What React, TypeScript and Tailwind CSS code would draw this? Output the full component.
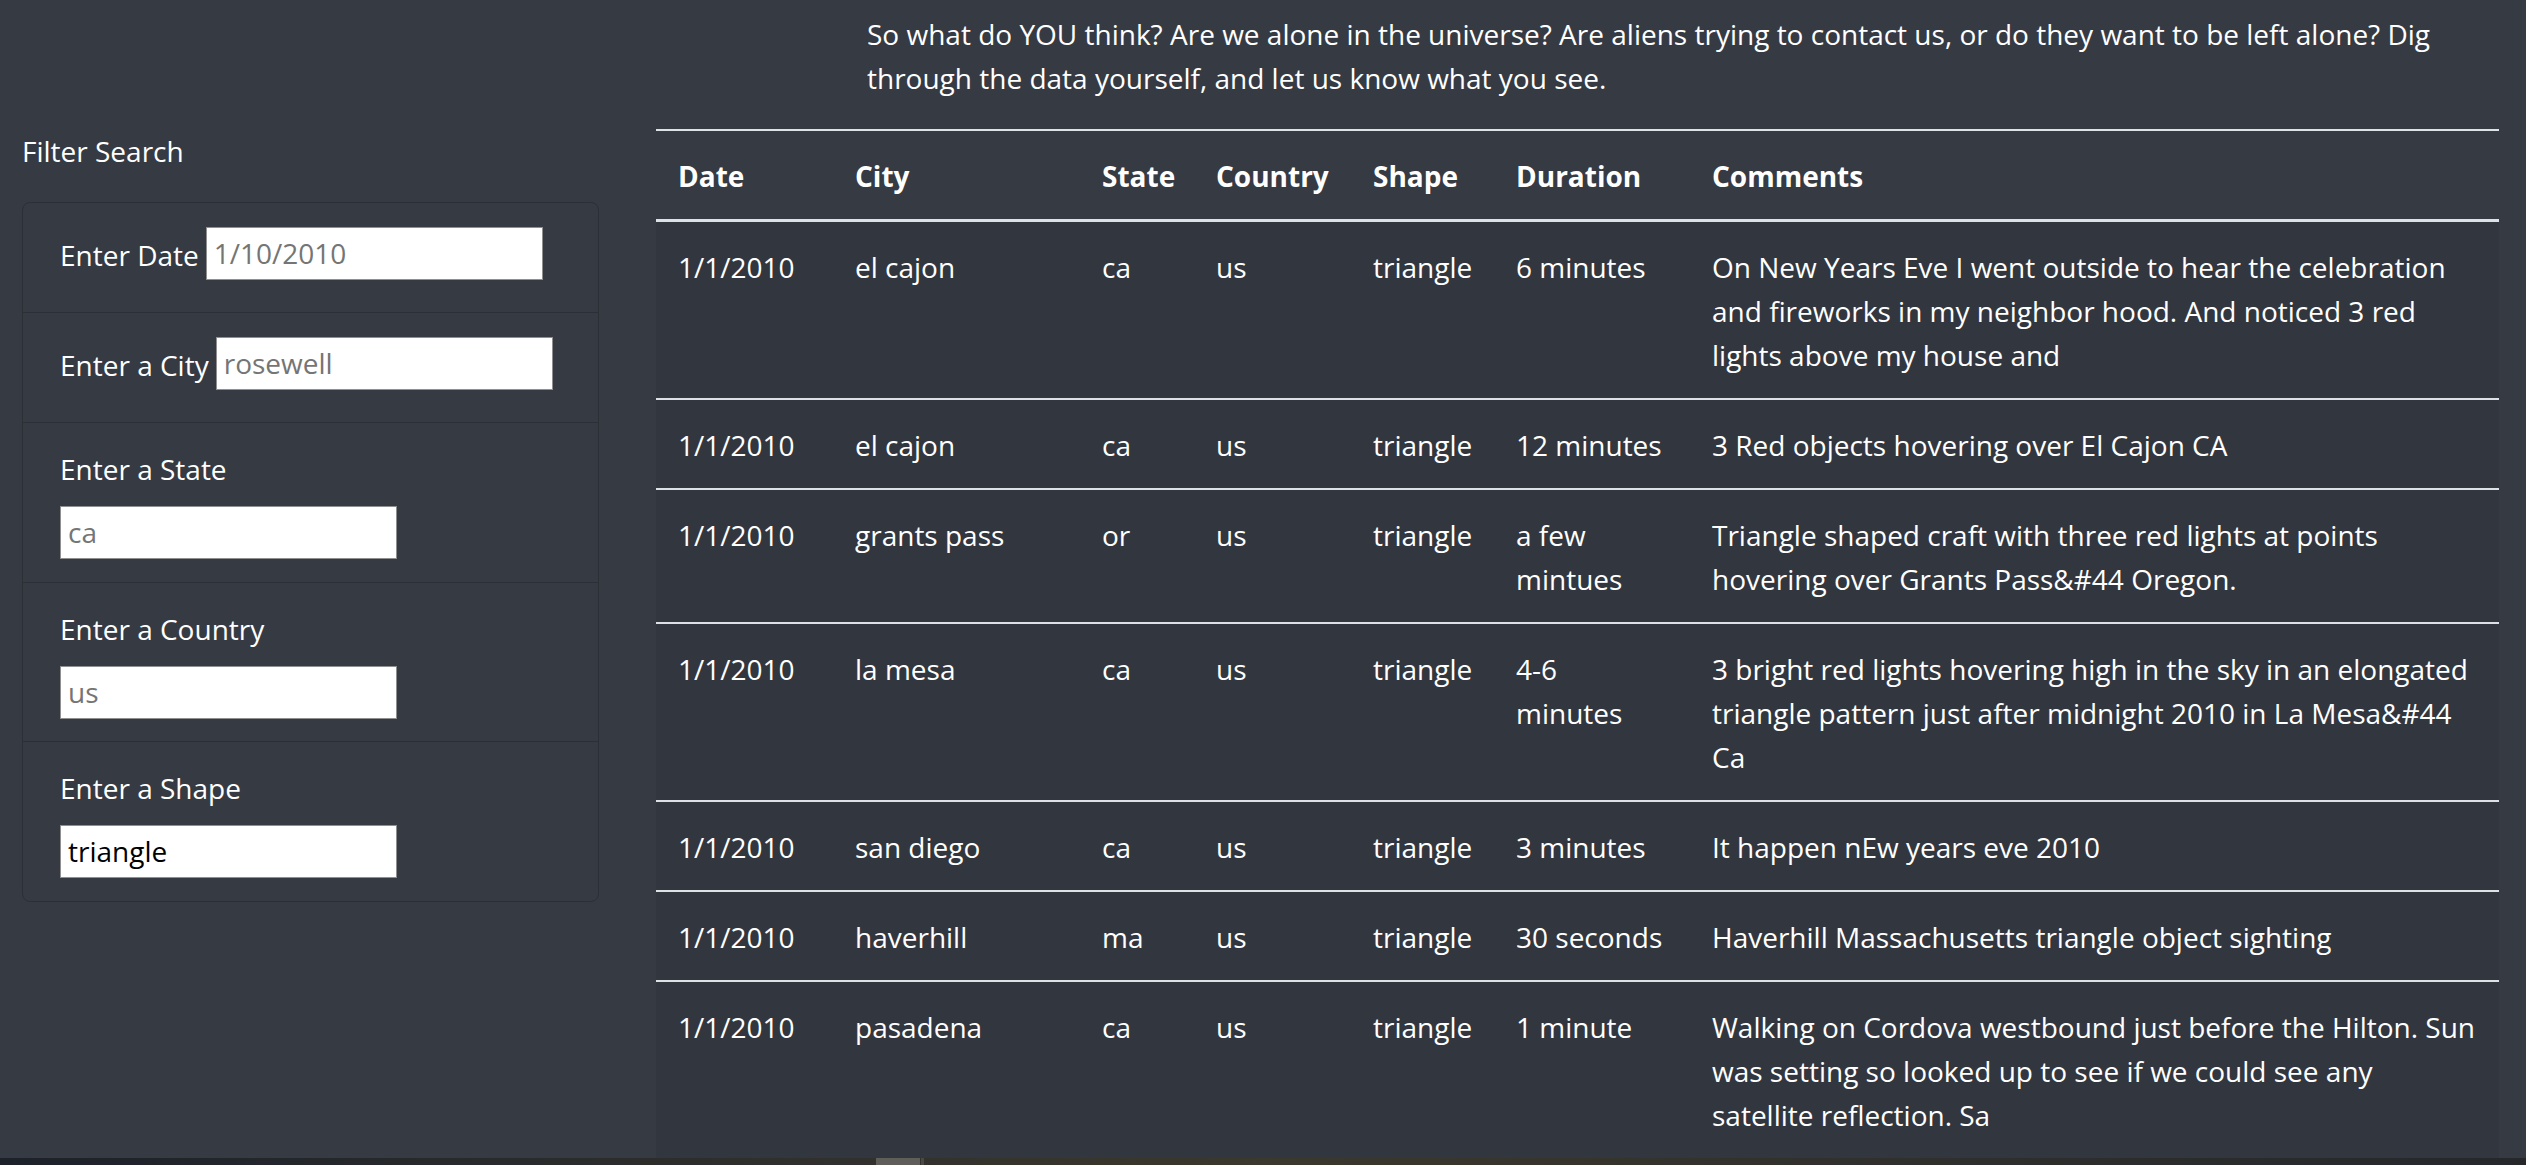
type Sighting = {
    date: string;
    city: string;
    state: string;
    country: string;
    shape: string;
    duration: string[];
    comments: string[];
};

const sightings: Sighting[] = [
    {
        date: "1/1/2010",
        city: "el cajon",
        state: "ca",
        country: "us",
        shape: "triangle",
        duration: ["6 minutes"],
        comments: [
            "On New Years Eve I went outside to hear the celebration",
            "and fireworks in my neighbor hood. And noticed 3 red",
            "lights above my house and",
        ],
    },
    {
        date: "1/1/2010",
        city: "el cajon",
        state: "ca",
        country: "us",
        shape: "triangle",
        duration: ["12 minutes"],
        comments: ["3 Red objects hovering over El Cajon CA"],
    },
    {
        date: "1/1/2010",
        city: "grants pass",
        state: "or",
        country: "us",
        shape: "triangle",
        duration: ["a few", "mintues"],
        comments: [
            "Triangle shaped craft with three red lights at points",
            "hovering over Grants Pass&#44 Oregon.",
        ],
    },
    {
        date: "1/1/2010",
        city: "la mesa",
        state: "ca",
        country: "us",
        shape: "triangle",
        duration: ["4-6", "minutes"],
        comments: [
            "3 bright red lights hovering high in the sky in an elongated",
            "triangle pattern just after midnight 2010 in La Mesa&#44",
            "Ca",
        ],
    },
    {
        date: "1/1/2010",
        city: "san diego",
        state: "ca",
        country: "us",
        shape: "triangle",
        duration: ["3 minutes"],
        comments: ["It happen nEw years eve 2010"],
    },
    {
        date: "1/1/2010",
        city: "haverhill",
        state: "ma",
        country: "us",
        shape: "triangle",
        duration: ["30 seconds"],
        comments: ["Haverhill Massachusetts triangle object sighting"],
    },
    {
        date: "1/1/2010",
        city: "pasadena",
        state: "ca",
        country: "us",
        shape: "triangle",
        duration: ["1 minute"],
        comments: [
            "Walking on Cordova westbound just before the Hilton. Sun",
            "was setting so looked up to see if we could see any",
            "satellite reflection. Sa",
        ],
    },
];

const inputClass =
    "h-[53px] w-[337px] border border-[#8f8f8f] bg-white px-[7px] text-[28px] text-black outline-none placeholder:text-[#757575]";

const cell = "px-[22px] pt-[23px] pb-[21px] align-top";

function Lines({ lines }: { lines: string[] }) {
    return (
        <>
            {lines.map((line, i) => (
                <span key={i} className="block whitespace-nowrap">
                    {line}
                </span>
            ))}
        </>
    );
}

export default function App() {
    return (
        <div className="relative h-[1165px] w-full overflow-hidden bg-[#363a43] font-['Open_Sans',sans-serif] text-[28px] leading-[44.4px] text-white">
            {/* ===== INTRO ===== */}
            <p className="ml-[867px] mb-[28px] pt-[12px]">
                <span className="block whitespace-nowrap">
                    So what do YOU think? Are we alone in the universe? Are aliens trying to contact us, or do they want to be left alone? Dig
                </span>
                <span className="block whitespace-nowrap">
                    through the data yourself, and let us know what you see.
                </span>
            </p>

            <div className="flex items-start">
                {/* ===== FILTER SIDEBAR ===== */}
                <aside className="w-[656px] shrink-0 pl-[22px]">
                    <h2 className="mb-[29px] leading-[44px]">Filter Search</h2>

                    <ul className="w-[577px] rounded-[8px] border border-[#2b2f36]">
                        <li className="flex h-[110px] items-center gap-[7px] border-b border-[#2b2f36] px-[37px] pb-[8px]">
                            <label htmlFor="datetime" className="mt-[4px] whitespace-nowrap">
                                Enter Date
                            </label>
                            <input id="datetime" className={inputClass} placeholder="1/10/2010" />
                        </li>
                        <li className="flex h-[110px] items-center gap-[7px] border-b border-[#2b2f36] px-[37px] pb-[8px]">
                            <label htmlFor="city" className="mt-[4px] whitespace-nowrap">
                                Enter a City
                            </label>
                            <input id="city" className={inputClass} placeholder="rosewell" />
                        </li>
                        <li className="border-b border-[#2b2f36] px-[37px] pt-[24px] pb-[23px]">
                            <label htmlFor="state" className="mb-[15px] block leading-[44px]">
                                Enter a State
                            </label>
                            <input id="state" className={inputClass} placeholder="ca" />
                        </li>
                        <li className="border-b border-[#2b2f36] px-[37px] pt-[24px] pb-[22px]">
                            <label htmlFor="country" className="mb-[15px] block leading-[44px]">
                                Enter a Country
                            </label>
                            <input id="country" className={inputClass} placeholder="us" />
                        </li>
                        <li className="px-[37px] pt-[24px] pb-[23px]">
                            <label htmlFor="shape" className="mb-[15px] block leading-[44px]">
                                Enter a Shape
                            </label>
                            <input id="shape" className={inputClass} defaultValue="triangle" />
                        </li>
                    </ul>
                </aside>

                {/* ===== UFO TABLE ===== */}
                <table className="w-[1843px] shrink-0 table-fixed border-collapse text-left leading-[44px]">
                    <colgroup>
                        <col className="w-[177px]" />
                        <col className="w-[247px]" />
                        <col className="w-[114px]" />
                        <col className="w-[157px]" />
                        <col className="w-[143px]" />
                        <col className="w-[196px]" />
                        <col className="w-[809px]" />
                    </colgroup>
                    <thead>
                        <tr className="border-t-2 border-b-[3px] border-[#dee2e6]">
                            {["Date", "City", "State", "Country", "Shape", "Duration", "Comments"].map((h) => (
                                <th key={h} className={`${cell} font-bold`}>
                                    {h}
                                </th>
                            ))}
                        </tr>
                    </thead>
                    <tbody className="bg-[#32363e]">
                        {sightings.map((s, i) => (
                            <tr key={i} className="border-b-2 border-[#dee2e6] last:border-b-0">
                                <td className={cell}>{s.date}</td>
                                <td className={`${cell} whitespace-nowrap`}>{s.city}</td>
                                <td className={cell}>{s.state}</td>
                                <td className={cell}>{s.country}</td>
                                <td className={cell}>{s.shape}</td>
                                <td className={cell}>
                                    <Lines lines={s.duration} />
                                </td>
                                <td className={cell}>
                                    <Lines lines={s.comments} />
                                </td>
                            </tr>
                        ))}
                    </tbody>
                </table>
            </div>

            {/* bottom edge of the window below the page */}
            <div className="absolute inset-x-0 bottom-0 h-[7px] bg-linear-to-r from-[#1d2129] via-[#3b382d] to-[#25272b]">
                <div className="absolute left-[876px] top-0 h-full w-[44px] bg-[#5f5e59]" />
                <div className="absolute left-[921px] top-0 h-full w-[3px] bg-[#4a4944]" />
            </div>
        </div>
    );
}
